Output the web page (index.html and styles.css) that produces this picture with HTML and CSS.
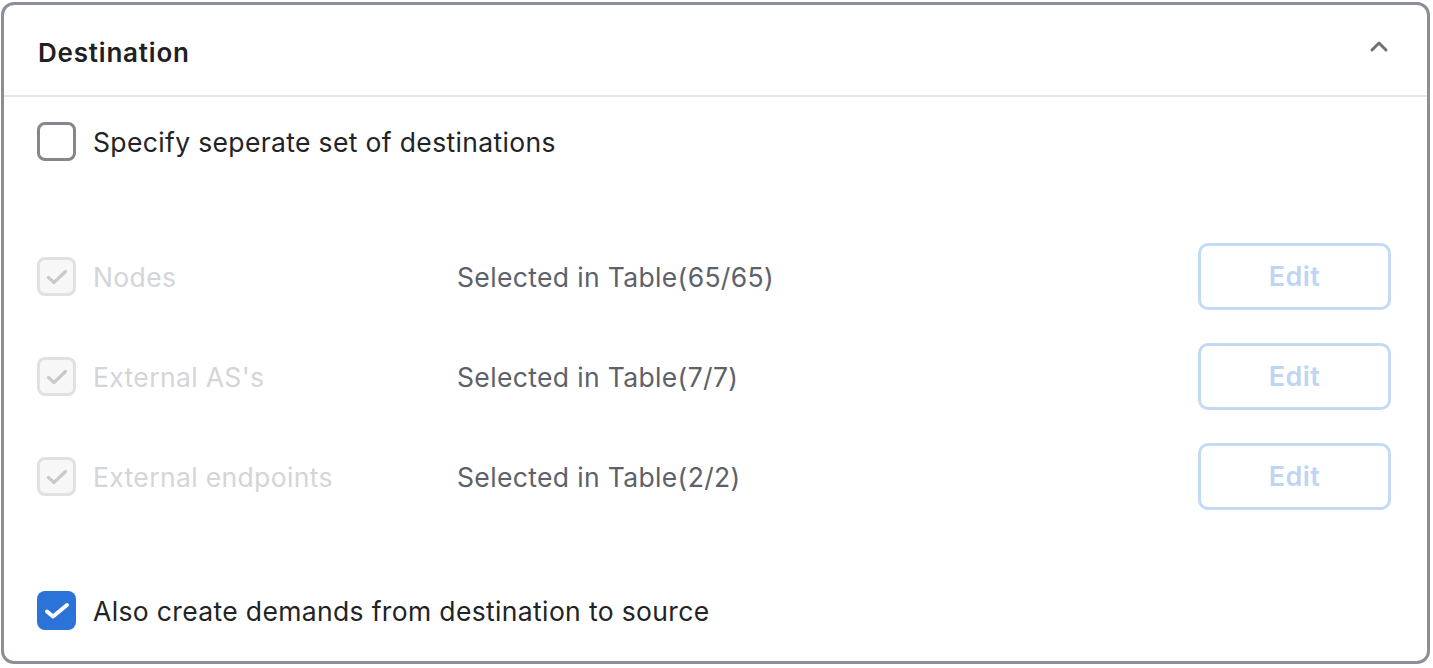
FILE: index.html
```html
<!DOCTYPE html>
<html>
<head>
<meta charset="utf-8">
<link rel="stylesheet" href="styles.css">
</head>
<body>
<div class="panel">
  <div class="panel-header">
    <div class="title">Destination</div>
    <svg class="chevron" width="20" height="14" viewBox="0 0 20 14"><polyline points="3,11 10,4 17,11" fill="none" stroke="#6d7179" stroke-width="3" stroke-linecap="round" stroke-linejoin="round"/></svg>
  </div>
  <div class="panel-body">
    <label class="check-row first">
      <span class="box"></span>
      <span class="check-label">Specify seperate set of destinations</span>
    </label>

    <div class="dest-list">
      <div class="dest-row">
        <div class="dest-name">
          <span class="box disabled"><svg width="26" height="20" viewBox="0 0 26 20"><polyline points="4.5,10.5 10,15.5 21.5,4.5" fill="none" stroke="#c8cace" stroke-width="3.2" stroke-linecap="round" stroke-linejoin="round"/></svg></span>
          <span class="check-label muted">Nodes</span>
        </div>
        <div class="dest-status">Selected in Table(65/65)</div>
        <button class="edit-btn">Edit</button>
      </div>
      <div class="dest-row">
        <div class="dest-name">
          <span class="box disabled"><svg width="26" height="20" viewBox="0 0 26 20"><polyline points="4.5,10.5 10,15.5 21.5,4.5" fill="none" stroke="#c8cace" stroke-width="3.2" stroke-linecap="round" stroke-linejoin="round"/></svg></span>
          <span class="check-label muted">External AS's</span>
        </div>
        <div class="dest-status">Selected in Table(7/7)</div>
        <button class="edit-btn">Edit</button>
      </div>
      <div class="dest-row">
        <div class="dest-name">
          <span class="box disabled"><svg width="26" height="20" viewBox="0 0 26 20"><polyline points="4.5,10.5 10,15.5 21.5,4.5" fill="none" stroke="#c8cace" stroke-width="3.2" stroke-linecap="round" stroke-linejoin="round"/></svg></span>
          <span class="check-label muted">External endpoints</span>
        </div>
        <div class="dest-status">Selected in Table(2/2)</div>
        <button class="edit-btn">Edit</button>
      </div>
    </div>

    <label class="check-row last">
      <span class="box checked"><svg width="30" height="22" viewBox="0 0 30 22"><polyline points="5,11.5 11,16.5 25,5" fill="none" stroke="#ffffff" stroke-width="4" stroke-linecap="round" stroke-linejoin="round"/></svg></span>
      <span class="check-label">Also create demands from destination to source</span>
    </label>
  </div>
</div>
</body>
</html>
```
FILE: styles.css
```css
* { box-sizing: border-box; }
html, body { margin: 0; padding: 0; background: #ffffff; }
body {
  font-family: Inter, "Noto Sans", "Liberation Sans", sans-serif;
  color: #222326;
  width: 1433px;
  height: 668px;
  overflow: hidden;
}
.panel {
  margin: 2px 3px 0 1px;
  height: 662px;
  border: 3px solid #8b8f96;
  border-radius: 13px;
  display: flex;
  flex-direction: column;
  overflow: hidden;
}
.panel-header {
  height: 92px;
  flex: none;
  border-bottom: 2px solid #e5e6e8;
  display: flex;
  align-items: center;
  justify-content: space-between;
  padding: 4px 38px 0 34px;
}
.title {
  font-size: 26px;
  font-weight: 600;
  letter-spacing: 0.8px;
  color: #1f2023;
}
.chevron { margin-top: -12px; }
.panel-body {
  flex: 1;
  display: flex;
  flex-direction: column;
  padding: 25px 36px 0 33px;
}
.check-row {
  display: flex;
  align-items: center;
  gap: 17px;
  height: 39px;
}
.box {
  width: 39px;
  height: 39px;
  flex: none;
  border: 3px solid #83878e;
  border-radius: 8px;
  display: flex;
  align-items: center;
  justify-content: center;
  background: #fff;
}
.box.disabled {
  border-color: #e0e1e3;
  background: #f7f7f8;
}
.box.checked {
  border: none;
  background: #2b72d9;
}
.check-label {
  font-size: 26.5px;
  color: #222326;
  letter-spacing: 0.35px;
}
.check-label.muted { color: #d3d5d8; }
.dest-list {
  margin-top: 82px;
  display: flex;
  flex-direction: column;
  gap: 33px;
}
.dest-row {
  display: flex;
  align-items: center;
  height: 67px;
}
.dest-name {
  width: 420px;
  flex: none;
  display: flex;
  align-items: center;
  gap: 17px;
}
.dest-status {
  flex: 1;
  font-size: 26.5px;
  color: #5d6169;
  letter-spacing: 0.35px;
}
.edit-btn {
  width: 193px;
  height: 67px;
  flex: none;
  border: 3px solid #c4d9f7;
  border-radius: 10px;
  background: #fff;
  color: #bfd5f5;
  font-family: inherit;
  font-size: 27px;
  font-weight: 600;
  letter-spacing: 0.4px;
}
.check-row.last { margin-top: 81px; }
```
